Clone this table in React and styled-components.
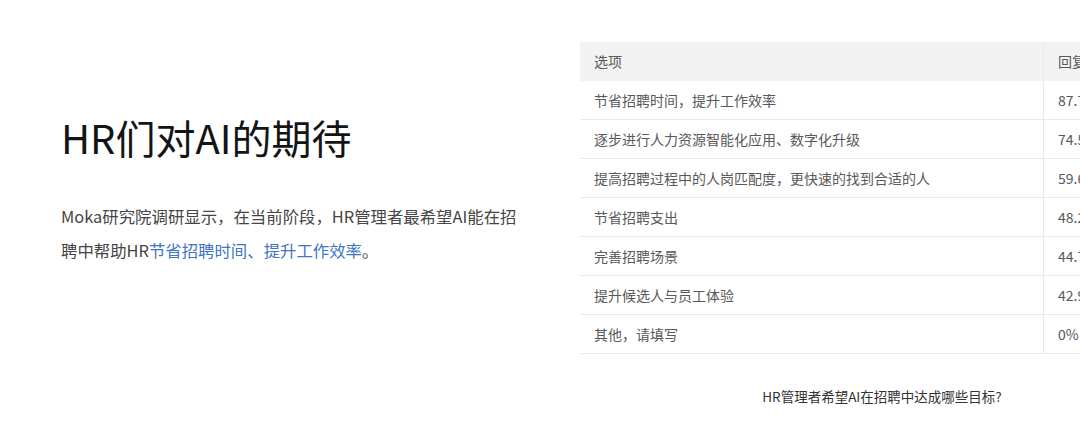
import React from 'react'
import styled, { createGlobalStyle } from 'styled-components'

const GlobalStyle = createGlobalStyle`
  html, body {
    margin: 0;
    padding: 0;
    background: #ffffff;
    overflow: hidden;
  }
  body {
    font-family: "Noto Sans CJK SC", "Noto Sans", sans-serif;
  }
`

const Page = styled.div`
  width: 1080px;
  height: 427px;
  display: flex;
  overflow: hidden;
  background: #ffffff;
`

const Intro = styled.section`
  width: 580px;
  flex-shrink: 0;
  box-sizing: border-box;
  padding: 113px 58px 0 61px;
  display: flex;
  flex-direction: column;
  gap: 38px;
`

const Title = styled.h1`
  margin: 0;
  font-size: 40px;
  line-height: 48px;
  font-weight: 400;
  color: #141414;
`

const Text = styled.p`
  margin: 0;
  font-size: 16.4px;
  line-height: 34px;
  color: #454545;
`

const Highlight = styled.span`
  color: #3f74c6;
`

const Figure = styled.section`
  flex-shrink: 0;
  width: 604px;
  padding-top: 42px;
  display: flex;
  flex-direction: column;
  align-items: center;
`

const Table = styled.div`
  width: 100%;
  display: flex;
  flex-direction: column;
  font-size: 14px;
  color: #595959;
`

const Row = styled.div`
  display: grid;
  grid-template-columns: 463px 1fr;
  height: 39px;
  box-sizing: border-box;
  border-bottom: 1px solid ${p => (p.$head ? '#f3f3f3' : '#e9e9e9')};
  background: ${p => (p.$head ? '#f3f3f3' : '#ffffff')};
`

const Cell = styled.div`
  display: flex;
  align-items: center;
  padding-left: 14px;
  white-space: nowrap;
  & + & {
    border-left: 1px solid #e9e9e9;
  }
`

const Caption = styled.div`
  margin-top: 32px;
  font-size: 13.5px;
  line-height: 20px;
  color: #333333;
`

const rows = [
  ['节省招聘时间，提升工作效率', '87.7%'],
  ['逐步进行人力资源智能化应用、数字化升级', '74.5%'],
  ['提高招聘过程中的人岗匹配度，更快速的找到合适的人', '59.6%'],
  ['节省招聘支出', '48.2%'],
  ['完善招聘场景', '44.7%'],
  ['提升候选人与员工体验', '42.9%'],
  ['其他，请填写', '0%'],
]

const App = () => {
  return (
    <>
      <GlobalStyle />
      <Page>
        <Intro>
          <Title>HR们对AI的期待</Title>
          <Text>
            Moka研究院调研显示，在当前阶段，HR管理者最希望AI能在招聘中帮助HR
            <Highlight>节省招聘时间、提升工作效率</Highlight>。
          </Text>
        </Intro>
        <Figure>
          <Table>
            <Row $head>
              <Cell>选项</Cell>
              <Cell>回复比例</Cell>
            </Row>
            {rows.map(([label, value]) => (
              <Row key={label}>
                <Cell>{label}</Cell>
                <Cell>{value}</Cell>
              </Row>
            ))}
          </Table>
          <Caption>HR管理者希望AI在招聘中达成哪些目标?</Caption>
        </Figure>
      </Page>
    </>
  )
}

export default App
